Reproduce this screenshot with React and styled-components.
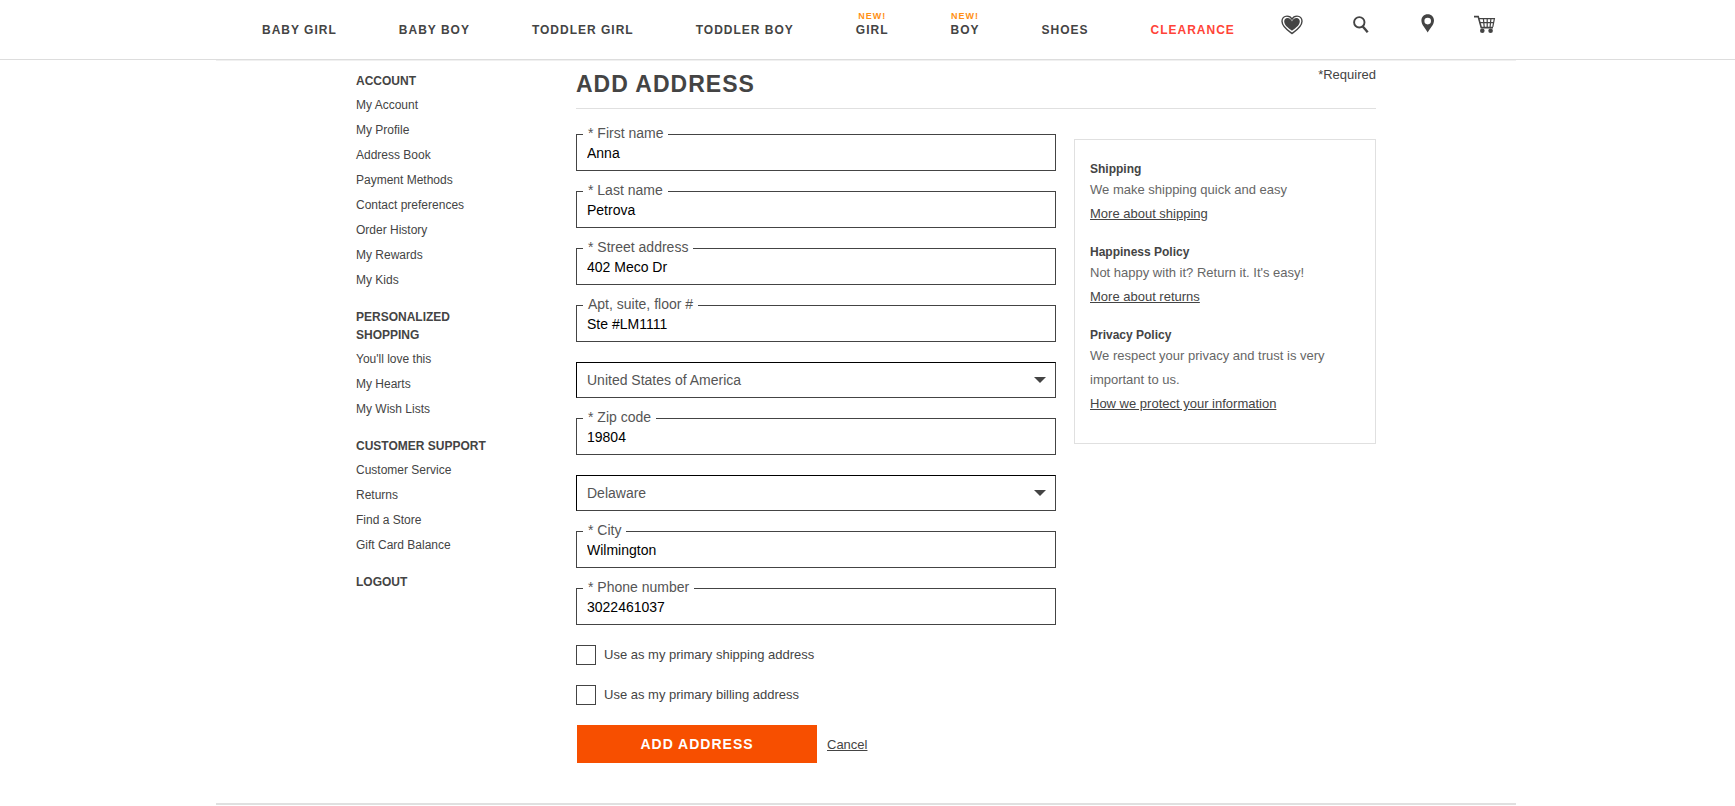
import React, { useState } from 'react';
import styled, { createGlobalStyle } from 'styled-components';

const GlobalStyle = createGlobalStyle`
	* {
		box-sizing: border-box;
	}

	body {
		margin: 0;
		background-color: #ffffff;
		color: #444444;
		font-family: Arial, "Liberation Sans", sans-serif;
		font-size: 13px;
	}

	h1, h2, p, ul {
		margin: 0;
		padding: 0;
	}

	ul {
		list-style: none;
	}

	a {
		color: inherit;
		text-decoration: none;
	}

	input, select, button {
		margin: 0;
		border-radius: 0;
		font-family: inherit;
	}
`;

const Header = styled.header`
	padding-right: 3px;
	border-bottom: 1px solid #dddddd;
`;

const HeaderInner = styled.div`
	display: flex;
	justify-content: space-between;
	align-items: flex-start;
	width: 100%;
	max-width: 1300px;
	height: 59px;
	margin: 0 auto;
	padding: 0 20px 0 46px;
`;

const Nav = styled.nav`
	display: flex;
	gap: 62px;
	padding-top: 23px;
`;

const NavLink = styled.a`
	position: relative;
	color: ${({ $sale }) => ($sale ? '#ff4438' : '#444444')};
	font-size: 12px;
	font-weight: bold;
	line-height: 14px;
	letter-spacing: 1px;
	text-transform: uppercase;
	white-space: nowrap;
`;

const NewBadge = styled.span`
	position: absolute;
	bottom: 100%;
	left: 0;
	right: 0;
	padding-bottom: 2px;
	color: #ff9015;
	font-size: 9px;
	line-height: 10px;
	text-align: center;
`;

const Tools = styled.div`
	display: grid;
	grid-template-columns: 72px 68px 53px 22px;
	align-items: start;
	padding-top: 14px;
`;

const ToolButton = styled.button`
	justify-self: start;
	padding: 0;
	border: 0;
	background: none;
	color: #444444;
	line-height: 0;
	cursor: pointer;
`;

const Page = styled.div`
	padding-right: 3px;
`;

const PageInner = styled.div`
	display: grid;
	grid-template-columns: 160px minmax(0, 1fr);
	gap: 60px;
	width: 100%;
	max-width: 1300px;
	margin: 0 auto;
	padding: 0 140px 40px;
	border-top: 1px solid #f0f0f0;
	border-bottom: 2px solid #e0e0e0;
`;

const Sidebar = styled.aside`
	display: flex;
	flex-direction: column;
	gap: 19px;
	padding-top: 11px;
	font-size: 12px;
	line-height: 18px;
`;

const SideTitle = styled.h2`
	font-size: 12px;
	font-weight: bold;
	line-height: 18px;
	text-transform: uppercase;
`;

const SideList = styled.ul`
	display: flex;
	flex-direction: column;
	gap: 7px;
	margin-top: 6px;
`;

const TitleRow = styled.div`
	display: flex;
	justify-content: space-between;
	height: 48px;
	border-bottom: 1px solid #e0e0e0;
`;

const Title = styled.h1`
	padding-top: 10px;
	font-size: 23px;
	line-height: 26px;
	letter-spacing: 1px;
	text-transform: uppercase;
`;

const Required = styled.span`
	padding-top: 6px;
	line-height: 15px;
`;

const Columns = styled.div`
	display: grid;
	grid-template-columns: minmax(0, 1fr) 302px;
	gap: 18px;
	align-items: start;
	padding-top: 25px;
`;

const Form = styled.form`
	display: flex;
	flex-direction: column;
	gap: 20px;
`;

const Field = styled.div`
	position: relative;
	font-size: 14px;
	line-height: 16px;
`;

const FieldLabel = styled.label`
	position: absolute;
	top: -9px;
	left: 7px;
	padding: 0 5px;
	background-color: #ffffff;
	color: #555555;
`;

const Input = styled.input`
	display: block;
	width: 100%;
	height: 37px;
	padding: 10px 10px 9px;
	border: 1px solid #444444;
	background-color: #ffffff;
	color: #000000;
	font-size: 14px;
	line-height: 16px;
`;

const SelectField = styled(Field)`
	&::after {
		content: '';
		position: absolute;
		top: 15px;
		right: 10px;
		border: solid transparent;
		border-width: 6px 6px 0;
		border-top-color: #444444;
		pointer-events: none;
	}
`;

const Select = styled.select`
	display: block;
	width: 100%;
	height: 36px;
	padding: 9px 10px;
	border: 1px solid;
	border-color: #000000 #444444 #444444 #000000;
	background-color: #ffffff;
	color: #555555;
	font-size: 14px;
	line-height: 16px;
	appearance: none;
`;

const CheckLabel = styled.label`
	display: flex;
	gap: 8px;
	line-height: 20px;
`;

const Checkbox = styled.input`
	width: 20px;
	height: 20px;
	border: 1px solid #444444;
	background-color: #ffffff;
	appearance: none;

	&:checked {
		background-color: #444444;
		box-shadow: inset 0 0 0 3px #ffffff;
	}
`;

const Actions = styled.div`
	display: flex;
	align-items: center;
	gap: 10px;
	padding-left: 1px;
`;

const SubmitButton = styled.button`
	width: 240px;
	height: 38px;
	border: 0;
	background-color: #f74f00;
	color: #ffffff;
	font-size: 14px;
	font-weight: bold;
	line-height: 16px;
	letter-spacing: 1px;
	text-transform: uppercase;
	cursor: pointer;
`;

const TextLink = styled.a`
	text-decoration: underline;
`;

const InfoBox = styled.aside`
	display: flex;
	flex-direction: column;
	gap: 17px;
	margin-top: 5px;
	padding: 20px 15px 27px;
	border: 1px solid #e0e0e0;
	line-height: 24px;
`;

const InfoTitle = styled.h2`
	font-size: 12px;
	line-height: 18px;
`;

const InfoText = styled.p`
	color: #666666;
`;

const HeartIcon = () => (
	<svg width="22" height="21" viewBox="0 0 22 21" fill="none">
		<path
			d="M11 19.5C8.5 17.5 1 13.2 1 7.3C1 4.3 3.2 2.1 6 2.1C8.2 2.1 10.1 3.3 11 5.1C11.9 3.3 13.8 2.1 16 2.1C18.8 2.1 21 4.3 21 7.3C21 13.2 13.5 17.5 11 19.5Z"
			stroke="currentColor"
			strokeWidth="1.4"
		/>
		<path
			d="M11 16.8C9 15.1 3.2 11.8 3.2 7.5C3.2 5.5 4.6 4.1 6.4 4.1C8.6 4.1 10.3 5.7 11 7.4C11.7 5.7 13.4 4.1 15.6 4.1C17.4 4.1 18.8 5.5 18.8 7.5C18.8 11.8 13 15.1 11 16.8Z"
			fill="currentColor"
		/>
	</svg>
);

const SearchIcon = () => (
	<svg width="16" height="20" viewBox="0 0 16 20" fill="none" stroke="currentColor">
		<circle cx="6.3" cy="8.3" r="5.2" strokeWidth="1.9" />
		<path d="M9.8 12.5L14.7 18.2" strokeWidth="2.4" />
	</svg>
);

const PinIcon = () => (
	<svg width="14" height="19" viewBox="0 0 14 19" fill="currentColor">
		<path
			fillRule="evenodd"
			d="M6.7 0.3C10.4 0.3 13 3 13 6.5C13 10.8 8.9 14.5 6.7 18.5C4.5 14.5 0.4 10.8 0.4 6.5C0.4 3 3 0.3 6.7 0.3ZM6.7 3.8A3.3 3.3 0 1 0 6.7 10.4A3.3 3.3 0 1 0 6.7 3.8Z"
		/>
	</svg>
);

const CartIcon = () => (
	<svg width="22" height="20" viewBox="0 0 22 20" fill="none" stroke="currentColor">
		<path d="M0 2.6H4.2L7.3 13.6H19" strokeWidth="1.6" />
		<path d="M4.6 4.6H20.4L18.8 12.8M5.6 8.6H19.6" strokeWidth="1.2" />
		<path d="M9.4 4.6L10.2 13M13.2 4.6V13M16.9 4.6L16.1 13" strokeWidth="1.2" />
		<circle cx="8.3" cy="16.8" r="2.3" fill="currentColor" stroke="none" />
		<circle cx="16.6" cy="16.8" r="2.3" fill="currentColor" stroke="none" />
	</svg>
);

const navItems = [
	{ label: 'Baby Girl' },
	{ label: 'Baby Boy' },
	{ label: 'Toddler Girl' },
	{ label: 'Toddler Boy' },
	{ label: 'Girl', isNew: true },
	{ label: 'Boy', isNew: true },
	{ label: 'Shoes' },
	{ label: 'Clearance', sale: true },
];

const sideGroups = [
	{
		title: 'Account',
		links: [
			'My Account',
			'My Profile',
			'Address Book',
			'Payment Methods',
			'Contact preferences',
			'Order History',
			'My Rewards',
			'My Kids',
		],
	},
	{ title: 'Personalized Shopping', links: ["You'll love this", 'My Hearts', 'My Wish Lists'] },
	{
		title: 'Customer Support',
		links: ['Customer Service', 'Returns', 'Find a Store', 'Gift Card Balance'],
	},
];

const infoItems = [
	{ title: 'Shipping', text: 'We make shipping quick and easy', link: 'More about shipping' },
	{ title: 'Happiness Policy', text: "Not happy with it? Return it. It's easy!", link: 'More about returns' },
	{
		title: 'Privacy Policy',
		text: 'We respect your privacy and trust is very important to us.',
		link: 'How we protect your information',
	},
];

const TextField = ({ id, label, value, onChange }) => (
	<Field>
		<Input id={id} name={id} type="text" value={value} onChange={onChange} />
		<FieldLabel htmlFor={id}>{label}</FieldLabel>
	</Field>
);

const App = () => {
	const [address, setAddress] = useState({
		firstName: 'Anna',
		lastName: 'Petrova',
		street: '402 Meco Dr',
		apt: 'Ste #LM1111',
		country: 'United States of America',
		zip: '19804',
		state: 'Delaware',
		city: 'Wilmington',
		phone: '3022461037',
	});

	const handleChange = (e) => {
		setAddress({ ...address, [e.target.name]: e.target.value });
	};

	const field = (id, label) => (
		<TextField id={id} label={label} value={address[id]} onChange={handleChange} />
	);

	return (
		<>
			<GlobalStyle />
			<Header>
				<HeaderInner>
					<Nav>
						{navItems.map((item) => (
							<NavLink key={item.label} href="#" $sale={item.sale}>
								{item.isNew && <NewBadge>New!</NewBadge>}
								{item.label}
							</NavLink>
						))}
					</Nav>
					<Tools>
						<ToolButton type="button" aria-label="Favorites"><HeartIcon /></ToolButton>
						<ToolButton type="button" aria-label="Search"><SearchIcon /></ToolButton>
						<ToolButton type="button" aria-label="Stores"><PinIcon /></ToolButton>
						<ToolButton type="button" aria-label="Cart"><CartIcon /></ToolButton>
					</Tools>
				</HeaderInner>
			</Header>
			<Page>
				<PageInner>
					<Sidebar>
						{sideGroups.map((group) => (
							<div key={group.title}>
								<SideTitle>{group.title}</SideTitle>
								<SideList>
									{group.links.map((link) => (
										<li key={link}><a href="#">{link}</a></li>
									))}
								</SideList>
							</div>
						))}
						<SideTitle><a href="#">Logout</a></SideTitle>
					</Sidebar>
					<main>
						<TitleRow>
							<Title>Add address</Title>
							<Required>*Required</Required>
						</TitleRow>
						<Columns>
							<Form onSubmit={(e) => e.preventDefault()}>
								{field('firstName', '* First name')}
								{field('lastName', '* Last name')}
								{field('street', '* Street address')}
								{field('apt', 'Apt, suite, floor #')}
								<SelectField>
									<Select name="country" aria-label="Country" value={address.country} onChange={handleChange}>
										<option>United States of America</option>
										<option>Canada</option>
									</Select>
								</SelectField>
								{field('zip', '* Zip code')}
								<SelectField>
									<Select name="state" aria-label="State" value={address.state} onChange={handleChange}>
										<option>Delaware</option>
										<option>Maryland</option>
									</Select>
								</SelectField>
								{field('city', '* City')}
								{field('phone', '* Phone number')}
								<CheckLabel>
									<Checkbox type="checkbox" name="primaryShipping" />
									Use as my primary shipping address
								</CheckLabel>
								<CheckLabel>
									<Checkbox type="checkbox" name="primaryBilling" />
									Use as my primary billing address
								</CheckLabel>
								<Actions>
									<SubmitButton type="submit">Add address</SubmitButton>
									<TextLink href="#">Cancel</TextLink>
								</Actions>
							</Form>
							<InfoBox>
								{infoItems.map((info) => (
									<div key={info.title}>
										<InfoTitle>{info.title}</InfoTitle>
										<InfoText>{info.text}</InfoText>
										<TextLink href="#">{info.link}</TextLink>
									</div>
								))}
							</InfoBox>
						</Columns>
					</main>
				</PageInner>
			</Page>
		</>
	);
};

export default App;
